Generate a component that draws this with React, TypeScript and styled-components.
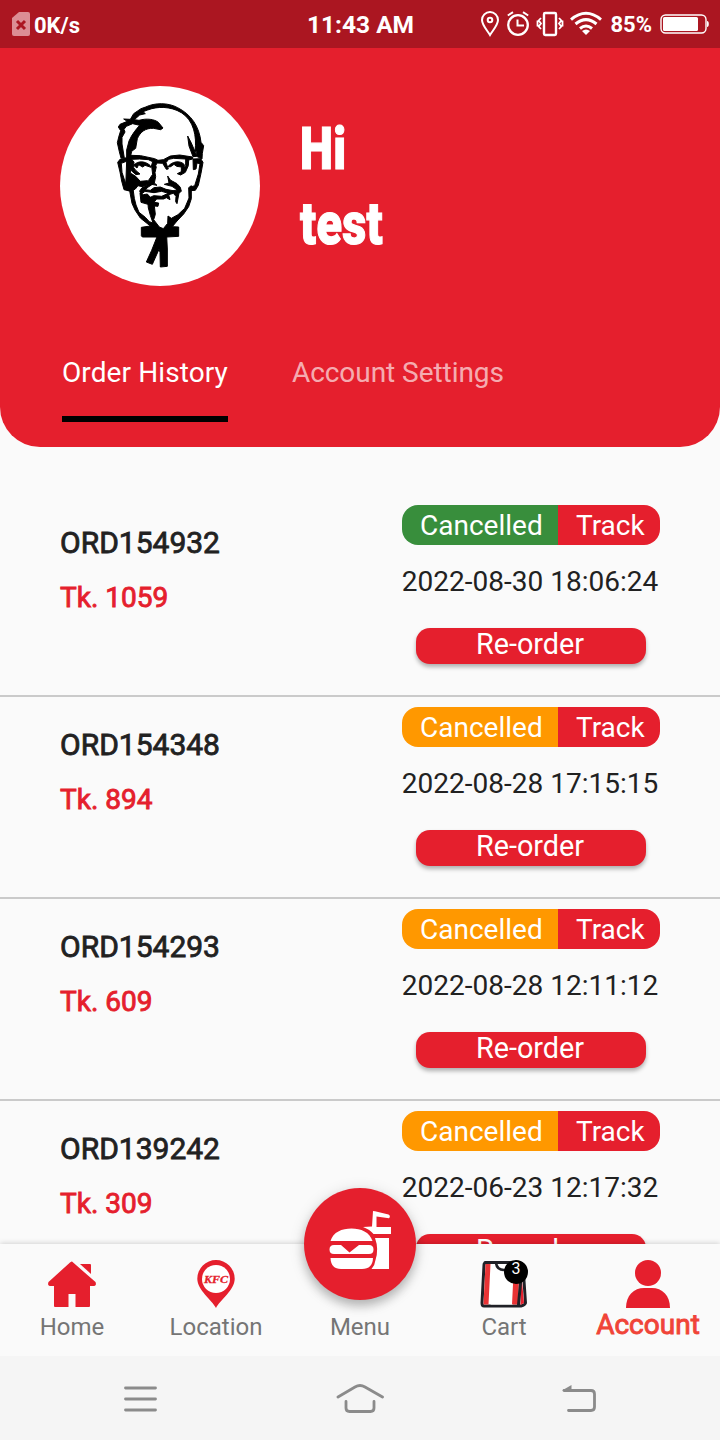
import React from 'react';
import styled, { createGlobalStyle } from 'styled-components';

const RED = '#e51f2d';

const GlobalStyle = createGlobalStyle`
  * { box-sizing: border-box; }
  body { margin: 0; background: #fafafa; font-family: Roboto, "Liberation Sans", sans-serif; }
`;

const Screen = styled.div`
  width: 720px;
  height: 1440px;
  display: flex;
  flex-direction: column;
  overflow: hidden;
  background: #fafafa;
`;

const StatusBar = styled.header`
  height: 48px;
  flex: none;
  display: grid;
  grid-template-columns: 1fr auto 1fr;
  align-items: center;
  padding: 2px 11px 0 12px;
  background: #ab1621;
  color: #fff;
  font-size: 22px;
  font-weight: 700;
  svg { display: block; flex: none; }
`;

const StatusGroup = styled.div<{ $end?: boolean }>`
  display: flex;
  align-items: center;
  justify-content: ${(p) => (p.$end ? 'flex-end' : 'flex-start')};
  gap: 4px;
  svg { margin-top: -2px; }
`;

const Clock = styled.div`
  font-size: 24.5px;
  line-height: 30px;
`;

const Percent = styled.span`
  margin: 0 4px 0 3px;
  line-height: 30px;
`;

const Profile = styled.section`
  height: 399px;
  flex: none;
  display: flex;
  flex-direction: column;
  padding: 37.5px 60px 0;
  border-radius: 0 0 40px 40px;
  background: ${RED};
  color: #fff;
`;

const Identity = styled.div`
  display: flex;
  align-items: center;
  gap: 40px;
`;

const Avatar = styled.div`
  width: 200px;
  height: 200px;
  flex: none;
  display: flex;
  justify-content: center;
  align-items: flex-start;
  padding-top: 4.5px;
  border-radius: 50%;
  background: #fff;
`;

const Greeting = styled.h1`
  margin: 0;
  font-size: 60px;
  font-weight: 900;
  line-height: 75px;
  letter-spacing: 0.4px;
  -webkit-text-stroke: 1.2px #fff;
  transform: scaleX(0.78);
  transform-origin: left;
`;

const Tabs = styled.nav`
  display: flex;
  gap: 64px;
  margin-top: 66px;
  padding-left: 2px;
`;

const Tab = styled.div<{ $active?: boolean }>`
  height: 70px;
  line-height: 42px;
  font-size: 28px;
  letter-spacing: ${(p) => (p.$active ? 0.1 : -0.05)}px;
  white-space: nowrap;
  color: ${(p) => (p.$active ? '#fff' : 'rgba(255, 255, 255, 0.65)')};
  border-bottom: 6px solid ${(p) => (p.$active ? '#000' : 'transparent')};
`;

const Orders = styled.main`
  flex: 1;
  min-height: 0;
  overflow: hidden;
  padding-top: 48px;
`;

const Order = styled.article`
  height: 202px;
  display: flex;
  justify-content: space-between;
  padding: 10px 60px 0;
  border-bottom: 2px solid #cacaca;
`;

const OrderInfo = styled.div`
  padding-top: 18px;
`;

const OrderId = styled.div`
  font-size: 30px;
  line-height: 40px;
  color: #212121;
  -webkit-text-stroke: 0.8px #212121;
`;

const Price = styled.div`
  margin-top: 15px;
  font-size: 28px;
  line-height: 40px;
  color: ${RED};
  -webkit-text-stroke: 0.9px ${RED};
`;

const OrderActions = styled.div`
  width: 258px;
  display: flex;
  flex-direction: column;
  align-items: center;
`;

const Status = styled.div`
  width: 258px;
  height: 40px;
  display: flex;
  overflow: hidden;
  border-radius: 16px;
  font-size: 28px;
  line-height: 41px;
  color: #fff;
`;

const State = styled.div<{ $color: string }>`
  width: 156px;
  padding-left: 18px;
  background: ${(p) => p.$color};
`;

const Track = styled.div`
  flex: 1;
  padding-left: 18px;
  background: ${RED};
`;

const Time = styled.time`
  margin: 16px 2px 0 0;
  font-size: 28px;
  line-height: 42px;
  white-space: nowrap;
  color: #212121;
`;

const Reorder = styled.button`
  width: 230px;
  height: 36px;
  margin-top: 24.5px;
  padding: 0 2px 3px 0;
  border: 0;
  border-radius: 14px;
  background: ${RED};
  box-shadow: 0 3px 4px rgba(0, 0, 0, 0.3);
  color: #fff;
  font-family: inherit;
  font-size: 28.8px;
  line-height: 33px;
`;

const BottomNav = styled.nav`
  position: relative;
  height: 112px;
  flex: none;
  display: grid;
  grid-template-columns: repeat(5, 144px);
  background: #fafafa;
  box-shadow: 0 -1px 5px rgba(0, 0, 0, 0.16);
`;

const NavItem = styled.div`
  display: flex;
  flex-direction: column;
  align-items: center;
  padding-top: 16px;
  svg { display: block; }
`;

const IconSlot = styled.div`
  position: relative;
  height: 48px;
`;

const NavLabel = styled.span<{ $active?: boolean }>`
  margin-top: ${(p) => (p.$active ? 1 : 3)}px;
  font-size: ${(p) => (p.$active ? 28 : 24)}px;
  line-height: 32px;
  color: ${(p) => (p.$active ? '#f04438' : '#757575')};
  -webkit-text-stroke: ${(p) => (p.$active ? '0.9px #f04438' : '0')};
`;

const Badge = styled.span`
  position: absolute;
  left: 24px;
  top: 0;
  width: 24px;
  height: 24px;
  border-radius: 50%;
  background: #000;
  color: #fff;
  font-size: 16px;
  line-height: 17px;
  text-align: center;
`;

const MenuButton = styled.div`
  position: absolute;
  left: 304px;
  top: -56px;
  width: 112px;
  height: 112px;
  border-radius: 50%;
  background: ${RED};
  box-shadow: 0 6px 10px rgba(0, 0, 0, 0.2), 0 3px 16px rgba(0, 0, 0, 0.14);
  svg { display: block; }
`;

const SystemBar = styled.footer`
  position: relative;
  height: 84px;
  flex: none;
  display: flex;
  align-items: center;
  justify-content: space-between;
  padding: 1px 123px 0;
  background: #f5f5f5;
`;

const Portrait = () => (
  <svg width="120" height="190" viewBox="0 0 360 570" fill="#000" stroke="#000" strokeWidth="3" strokeLinejoin="round">
    {/* crown */}
    <path d="M71 87 L91 88 L101 71 L123 56 L137 51 C164 38 204 37 233 53 C273 73 298 109 303 157 L311 167 L307 190 L306 207 L290 199 L290 184 L285 184 C291 138 281 91 244 68 C211 48 171 49 143 60 L129 65 L136 71 L119 75 L103 89 L117 91 C140 84 164 88 175 97 L189 114 L182 119 L160 115 C137 114 121 125 112 146 L107 175 L95 184 L91 202 L80 201 L80 180 L87 153 C96 132 110 116 119 106 L98 101 L79 109 L72 118 L75 126 L66 142 L66 162 L73 204 L63 204 L58 185 L52 158 L57 138 L62 122 L55 111 L60 103 L82 94 Z" />
    <path d="M263 138 L273 157 L283 180 L290 199 L279 200 L267 168 Z" />
    {/* ears */}
    <path d="M79 205 L61 207 L53 217 L60 246 L65 273 L72 299 L88 303 L83 283 L77 281 L66 247 L64 220 L79 214 Z" />
    <path d="M279 207 L302 206 L309 217 L303 250 L295 286 L286 301 L271 302 L272 291 L284 287 L295 252 L300 221 L291 219 L288 237 L280 239 Z" />
    {/* glasses */}
    <path d="M77 203 L93 196 L122 197 L164 206 L174 211 L190 209 L211 198 L239 195 L278 201 L278 207 L266 210 L265 227 L256 247 L242 255 L232 251 L246 244 L257 227 L257 207 L221 205 L206 208 L198 218 L205 237 L199 238 L188 220 L171 219 L163 235 L154 229 L158 215 L145 209 L119 207 L95 208 L102 216 L101 233 L108 242 L120 252 L108 254 L94 242 L88 217 L79 212 Z" />
    <path d="M101 226 C113 212 134 212 150 226 L153 232 L135 226 L128 231 L116 224 L111 234 Z" />
    <path d="M203 231 C214 215 240 209 253 224 L252 241 L244 244 L244 231 L230 229 L222 223 L212 230 Z" />
    {/* nose, moustache and mouth */}
    <path d="M155 229 L169 230 L165 248 L167 260 L163 279 L171 286 L154 283 L145 272 L158 253 Z" />
    <path d="M203 258 L211 270 L218 274 L231 281 L241 292 L244 304 L237 309 L231 341 L227 335 L228 319 L220 310 L206 314 L210 329 L199 323 L191 327 L165 327 L149 323 L161 317 L185 319 L205 310 L185 304 L162 308 L135 304 L123 313 L119 303 L126 293 L150 279 L157 283 L145 291 L135 299 L151 301 L162 293 L181 291 L198 298 L219 302 L232 300 L216 289 L193 283 L207 279 Z" />
    {/* shaded cheek */}
    <path d="M80 212 L92 216 L91 249 L107 259 L121 274 L142 272 L151 279 L126 290 L114 287 L106 297 L93 304 L76 296 L78 267 Z" />
    {/* jaw, shadow and goatee */}
    <path d="M88 297 L99 296 L103 325 L108 345 L117 367 L136 382 L148 395 L159 399 L151 376 L145 354 L144 343 L123 337 L120 309 L131 314 L142 312 L152 323 L169 328 L162 337 L176 339 L174 349 L163 348 L166 373 L161 389 L178 411 L190 416 L203 400 L204 378 L214 385 L234 374 L254 355 L267 324 L266 293 L274 287 L274 326 L266 350 L251 372 L231 393 L217 410 L236 411 L236 439 L200 441 L188 441 L177 441 L127 441 L124 437 L124 412 L151 408 L121 384 L105 360 L96 340 Z" />
    {/* string tie */}
    <path d="M172 438 L200 438 L202 477 L202 529 L181 531 L180 487 L177 478 L157 523 L139 516 L155 481 Z" />
  </svg>
);

const SimIcon = () => (
  <svg width="18" height="24" viewBox="0 0 18 24">
    <path d="M7 0H16Q18 0 18 2V22Q18 24 16 24H2Q0 24 0 22V6Z" fill="#dc8d94" />
    <path d="M5 9L13 17M13 9L5 17" stroke="#ab1621" strokeWidth="3" />
  </svg>
);

const StatusIcons = () => (
  <svg width="122" height="26" viewBox="0 0 122 26" fill="none" stroke="#fff" strokeWidth="2">
    <path d="M9 24C6 19 1 14 1 9a8 8 0 0 1 16 0C17 14 12 19 9 24Z" />
    <circle cx="9" cy="9" r="2.3" />
    <circle cx="37" cy="14" r="9.8" strokeWidth="2.3" />
    <path d="M36.5 8.5V14.500H43M26.800 4.500L32 1.200M47.200 4.500L42 1.200" />
    <rect x="63" y="2" width="12" height="22" rx="1.2" strokeWidth="2.4" />
    <path d="M60 7L57.700 9.500L60 12.500L57.700 15.500L60 18M56.500 9.500V15.500M78 7L80.300 9.500L78 12.500L80.300 15.500L78 18M81.500 9.500V15.500" strokeWidth="1.8" />
    <path d="M90 8.600Q105-4 120 8.600M94.500 13Q105 4.300 115.500 13M99 17.500Q105 12.500 111 17.500" strokeWidth="3" />
    <path d="M101 20Q105 17 109 20L105 24Z" fill="#fff" stroke="none" />
  </svg>
);

const BatteryIcon = () => (
  <svg width="49" height="20" viewBox="0 0 49 20">
    <rect x="1" y="1" width="45" height="18" rx="4.5" fill="none" stroke="#fff" strokeWidth="1.4" />
    <rect x="3" y="3" width="35" height="14" rx="1.5" fill="#fff" />
    <path d="M47 7Q48.800 7 48.800 10T47 13Z" fill="#fff" />
  </svg>
);

const HomeIcon = () => (
  <svg width="48" height="48" viewBox="0 0 48 48" fill={RED}>
    <path d="M24 1.600 47.500 22Q49 26 45 26H42V46Q42 47 41 47H27.500V34H20.500V47H7Q6 47 6 46V26H3Q-1 26 .5 22L22 2.500Q24 1 24 1.600Z" />
    <path d="M32 4H42Q43 4 43 5V14Z" />
  </svg>
);

const LocationIcon = () => (
  <svg width="38" height="48" viewBox="0 0 38 48">
    <path d="M19 48C15 40 .3 30 .3 18.700a18.700 18.700 0 0 1 37.400 0C37.700 30 23 40 19 48Z" fill={RED} />
    <circle cx="19" cy="19" r="14" fill="#fff" />
    <text x="19" y="22.8" textAnchor="middle" textLength="24" lengthAdjust="spacingAndGlyphs" fontFamily="Liberation Serif, serif" fontWeight="700" fontStyle="italic" fontSize="10.4" fill={RED} stroke={RED} strokeWidth=".3">KFC</text>
  </svg>
);

const BagIcon = () => (
  <svg width="48" height="48" viewBox="0 0 48 48" fill="none" strokeLinecap="round" strokeLinejoin="round">
    <path d="M5 2.500H38Q42 2.500 43 6L45.500 43Q45 45 41 46H4Q2 46 2 43L4 5Q4 3 6 2.500Z" fill="#fff" stroke="#202127" strokeWidth="3" />
    <path d="M5.500 4H10.500L8.500 44.500H3.500ZM34 4H39L38.500 44.500H32Z" fill="#e93335" />
    <path d="M41 10L44 43L40.500 45Z" fill="#e51f2d" />
    <path d="M39 4L40.500 23L38.500 45" stroke="#202127" strokeWidth="3" />
    <path d="M16 3Q17 10 24 10Q31 10 32 3" stroke="#202127" strokeWidth="2.6" />
    <path d="M11 44.500H32" stroke="#cfcfcf" strokeWidth="1" />
  </svg>
);

const AccountIcon = () => (
  <svg width="44" height="48" viewBox="0 0 44 48" fill={RED}>
    <circle cx="22" cy="13" r="13" />
    <path d="M0 48C0 35 8 28 18 28H26C36 28 44 35 44 48Z" />
  </svg>
);

const MealIcon = () => (
  <svg width="112" height="112" viewBox="0 0 112 112" fill="#fff">
    <path d="M26.500 53C29 44 38 40.500 47.500 40.500S65.500 44 68.500 53Z" />
    <path d="M30 57H37L45.500 64.500L55 57H65Q69.500 57 69.500 61.500T65 66H30Q25.500 66 25.500 61.500T30 57Z" />
    <path d="M26.500 70H69Q68.500 81 58 81H37Q27 81 26.500 70Z" />
    <path d="M59 39L68 38.500L69 23Q69 23 71 23.200L84.500 26.500Q87 28 85 30.200L72.500 28.500V39H87V46H69.500Q66 41.500 59 39Z" />
    <path d="M71 50H85V81H67.500Q71 77 71.500 72Q75 61 71 50Z" />
  </svg>
);

const RecentsIcon = () => (
  <svg width="35" height="28" viewBox="0 0 35 28" fill="none" stroke="#8b8b8b" strokeWidth="2.8" strokeLinecap="round">
    <path d="M2.500 3H32.500M2.500 14H32.500M2.500 25H32.500" />
  </svg>
);

const LauncherIcon = () => (
  <svg width="48" height="32" viewBox="0 0 48 32" fill="none" stroke="#8b8b8b" strokeWidth="2.800" strokeLinecap="round">
    <path d="M2 14L19 4Q24 1 29 4L46.500 14M10 18.500V25Q10 28.500 13.500 28.500H34.500Q38 28.500 38 25V18.500" />
  </svg>
);

const BackIcon = () => (
  <svg width="36" height="28" viewBox="0 0 36 28" fill="none">
    <path d="M3 5.500H30Q33.500 5.500 33.500 9V22Q33.500 25.500 30 25.500H7.500" stroke="#8b8b8b" strokeWidth="2.800" strokeLinecap="round" />
    <path d="M1 5.500L10.500 0V6Z" fill="#8b8b8b" />
  </svg>
);

const orders = [
  { id: 'ORD154932', price: 'Tk. 1059', time: '2022-08-30 18:06:24', color: '#388e3c' },
  { id: 'ORD154348', price: 'Tk. 894', time: '2022-08-28 17:15:15', color: '#ff9800' },
  { id: 'ORD154293', price: 'Tk. 609', time: '2022-08-28 12:11:12', color: '#ff9800' },
  { id: 'ORD139242', price: 'Tk. 309', time: '2022-06-23 12:17:32', color: '#ff9800' },
];

export default function App() {
  return (
    <Screen>
      <GlobalStyle />
      <StatusBar>
        <StatusGroup><SimIcon />0K/s</StatusGroup>
        <Clock>11:43 AM</Clock>
        <StatusGroup $end><StatusIcons /><Percent>85%</Percent><BatteryIcon /></StatusGroup>
      </StatusBar>
      <Profile>
        <Identity>
          <Avatar><Portrait /></Avatar>
          <Greeting>Hi<br />test</Greeting>
        </Identity>
        <Tabs>
          <Tab $active>Order History</Tab>
          <Tab>Account Settings</Tab>
        </Tabs>
      </Profile>
      <Orders>
        {orders.map((o) => (
          <Order key={o.id}>
            <OrderInfo>
              <OrderId>{o.id}</OrderId>
              <Price>{o.price}</Price>
            </OrderInfo>
            <OrderActions>
              <Status>
                <State $color={o.color}>Cancelled</State>
                <Track>Track</Track>
              </Status>
              <Time>{o.time}</Time>
              <Reorder>Re-order</Reorder>
            </OrderActions>
          </Order>
        ))}
      </Orders>
      <BottomNav>
        <NavItem><IconSlot><HomeIcon /></IconSlot><NavLabel>Home</NavLabel></NavItem>
        <NavItem><IconSlot><LocationIcon /></IconSlot><NavLabel>Location</NavLabel></NavItem>
        <NavItem><IconSlot /><NavLabel>Menu</NavLabel></NavItem>
        <NavItem><IconSlot><BagIcon /><Badge>3</Badge></IconSlot><NavLabel>Cart</NavLabel></NavItem>
        <NavItem><IconSlot><AccountIcon /></IconSlot><NavLabel $active>Account</NavLabel></NavItem>
        <MenuButton><MealIcon /></MenuButton>
      </BottomNav>
      <SystemBar>
        <RecentsIcon />
        <LauncherIcon />
        <BackIcon />
      </SystemBar>
    </Screen>
  );
}
